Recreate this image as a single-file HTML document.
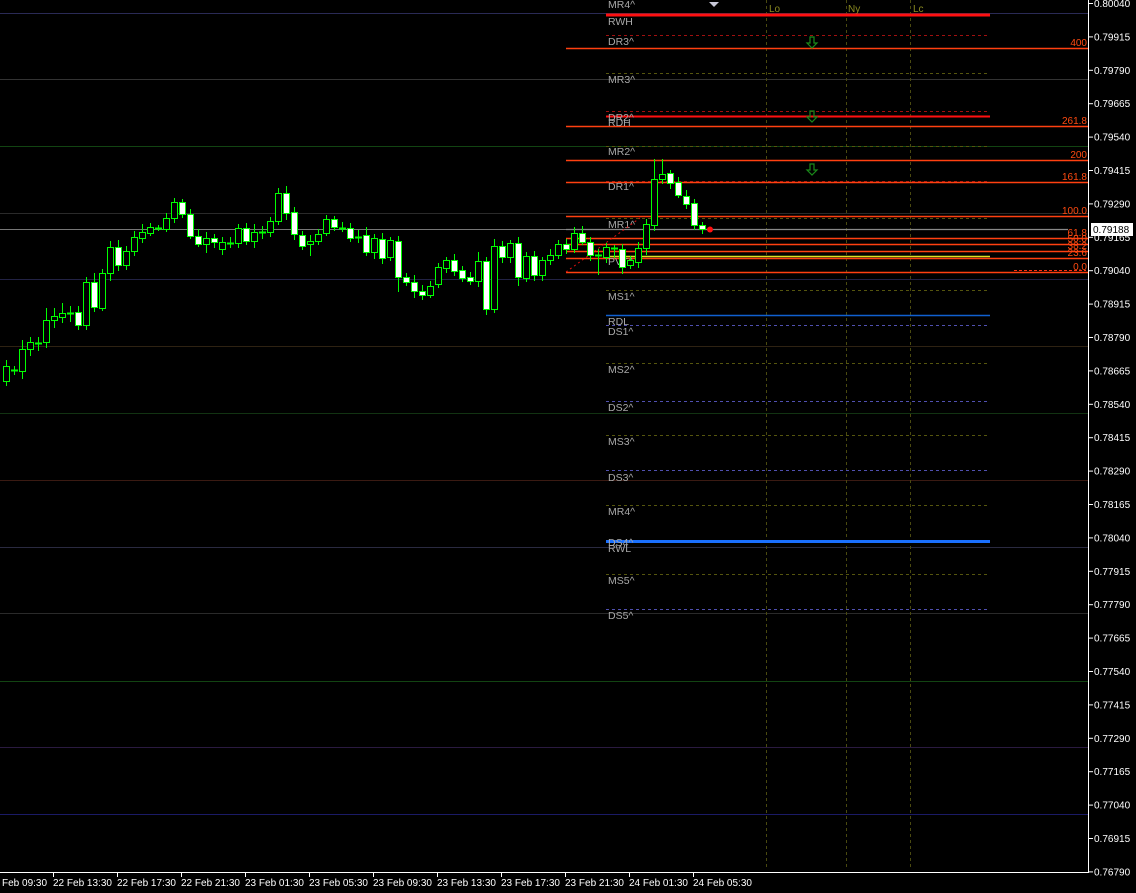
<!DOCTYPE html>
<html><head><meta charset="utf-8"><style>
html,body{margin:0;padding:0;background:#000;width:1136px;height:893px;overflow:hidden}
svg{display:block}
text{font-family:"Liberation Sans","DejaVu Sans",sans-serif}
</style></head><body>
<svg id="s" width="1136" height="893" xmlns="http://www.w3.org/2000/svg">
<rect width="1136" height="893" fill="#000"/>
<g id="full"></g>
<g id="lv"></g>
<g id="cd"></g>
<g id="ax"></g>
</svg>
<script>
var NS="http://www.w3.org/2000/svg";
function el(p,t,a,txt){var e=document.createElementNS(NS,t);for(var k in a)e.setAttribute(k,a[k]);if(txt!=null)e.textContent=txt;document.getElementById(p).appendChild(e);return e;}
function ln(p,x1,y1,x2,y2,c,w,d){var a={x1:x1,y1:y1,x2:x2,y2:y2,stroke:c,"stroke-width":w||1};if(d)a["stroke-dasharray"]=d;return el(p,"line",a);}
// full width lines
[[13,"#2a2a55"],[79,"#333"],[146,"#124412"],[213,"#2a2a2a"],[279,"#222244"],[346,"#2e2212"],[413,"#123312"],[480,"#3a1a12"],[547,"#2a2a40"],[613,"#2a2a2a"],[681,"#124412"],[747,"#2a1a40"],[814,"#1a1a66"]].forEach(function(v){ln("full",0,v[0]+.5,1088,v[0]+.5,v[1],1);});
// vertical session lines
[766,846,910].forEach(function(x){ln("full",x+.5,0,x+.5,870,"#4a4a10",1,"3,3");});
el("lv","text",{x:769,y:12,fill:"#8a8a20","font-size":10},"Lo");
el("lv","text",{x:848,y:12,fill:"#8a8a20","font-size":10},"Ny");
el("lv","text",{x:913,y:12,fill:"#8a8a20","font-size":10},"Lc");
// dashed pivots
var ol="#55550e",db="#5050b0",dr="#a01010";
[[35,dr],[73,ol],[111,dr],[146,ol],[181,dr],[218,ol],[290,ol],[325,db],[363,ol],[401,db],[435,ol],[470,db],[505,ol],[540,db],[574,ol],[609,db]].forEach(function(v){ln("lv",606,v[0]+.5,990,v[0]+.5,v[1],1,"3,3");});
// solid level lines
ln("lv",606,15,990,15,"#ff1010",3);
ln("lv",606,116.5,990,116.5,"#ff1010",2);
ln("lv",606,315.5,990,315.5,"#1060d0",1.5);
ln("lv",606,541.5,990,541.5,"#1a70ff",3);
ln("lv",606,256.5,990,256.5,"#e0e020",1.5);
// fib lines
[[48,"400"],[126,"261.8"],[160,"200"],[182,"161.8"],[216,"100.0"],[238,"61.8"],[244,"50.0"],[251,"38.2"],[258,"23.6"],[272,"0.0"]].forEach(function(v){ln("lv",566,v[0]+.5,1088,v[0]+.5,"#ff4010",1.5);el("lv","text",{x:1087,y:v[0]-2,fill:"#ff4a10","font-size":10,"text-anchor":"end"},v[1]);});
ln("lv",1014,270.5,1086,270.5,"#ff3010",1,"3,2");
// current price line
ln("lv",566,229.5,1068,229.5,"#888",1.2);
ln("lv",0,229.5,566,229.5,"#777",1);
// labels
[[8,"MR4^"],[25,"RWH"],[45,"DR3^"],[83,"MR3^"],[121,"DR2^"],[126,"RDH"],[155,"MR2^"],[190,"DR1^"],[228,"MR1^"],[265,"PVT^"],[300,"MS1^"],[325,"RDL"],[335,"DS1^"],[373,"MS2^"],[411,"DS2^"],[445,"MS3^"],[481,"DS3^"],[515,"MR4^"],[546,"DS4^"],[552,"RWL"],[584,"MS5^"],[619,"DS5^"]].forEach(function(v){el("lv","text",{x:608,y:v[0],fill:"#a8a8a8","font-size":10.5},v[1]);});
// red diagonal
ln("lv",566,272,640,218,"#e01010",1,"2,3");
// green arrows
[42,116,169].forEach(function(y){el("lv","path",{d:"M810 "+(y-5)+"h4v6h3l-5 5l-5-5h3z",fill:"none",stroke:"#1a8a1a","stroke-width":1.2});});
// triangle top
el("lv","path",{d:"M709 2h10l-5 5z",fill:"#c8c8d8"});
// candles [open, close]
var C=[[381,366],[370,370],[371,349],[349,342],[343,343],[342,320],[320,316],[317,313],[313,313],[312,325],[325,282],[282,307],[308,273],[273,247],[247,265],[265,251],[251,237],[238,232],[233,227],[228,228],[229,218],[218,202],[202,214],[214,236],[236,244],[244,238],[238,242],[249,242],[243,243],[243,228],[228,241],[241,232],[232,232],[232,221],[221,193],[193,213],[212,234],[235,246],[244,241],[241,234],[233,219],[219,227],[228,228],[228,238],[237,237],[235,252],[252,238],[239,258],[257,240],[241,277],[277,282],[282,291],[291,295],[295,286],[284,267],[268,260],[260,271],[270,278],[277,281],[281,261],[261,309],[309,246],[246,257],[257,243],[243,277],[278,256],[256,275],[275,260],[260,255],[255,244],[244,249],[249,233],[233,242],[242,255],[255,255],[257,247],[248,248],[249,267],[265,260],[262,248],[248,224],[225,179],[179,174],[173,183],[182,195],[196,204],[203,225],[225,229]];
var hw=[6,4,9,5,6,12,8,10,7,6,5,9,4,6,7,5,6,8,4,3,5,4,3,5,7,6,4,5,6,4,5,8,6,4,5,7,5,4,6,5,4,3,6,5,7,8,4,6,3,5,4,7,6,5,4,3,6,4,5,9,4,7,5,3,6,4,5,3,6,4,5,6,7,5,6,4,3,5,4,6,5,20,15,3,5,6,4,3];
C.forEach(function(c,i){var x=6+8*i,o=c[0],cl=c[1],t=Math.min(o,cl),b=Math.max(o,cl),h=hw[i],l=hw[(i*7+3)%hw.length];
ln("cd",x+.5,t-h,x+.5,b+l,"#00ff00",1);
if(b-t<1){ln("cd",x-3,t+.5,x+4,t+.5,"#00ff00",2);return;}
var bear=o<cl;el("cd","rect",{x:x-2.5,y:t+.5,width:6,height:b-t,fill:bear?"#fff":"#000",stroke:"#00ff00","stroke-width":1});});
el("cd","circle",{cx:710,cy:229.5,r:3,fill:"#ff1010"});
// axes
ln("ax",1088.5,0,1088.5,873,"#fff",1);
ln("ax",0,872.5,1088,872.5,"#fff",1);
var ps=["0.80040","0.79915","0.79790","0.79665","0.79540","0.79415","0.79290","0.79165","0.79040","0.78915","0.78790","0.78665","0.78540","0.78415","0.78290","0.78165","0.78040","0.77915","0.77790","0.77665","0.77540","0.77415","0.77290","0.77165","0.77040","0.76915","0.76790"];
ps.forEach(function(p,i){var y=3+i*33.4;ln("ax",1088,y+.5,1093,y+.5,"#fff",1);el("ax","text",{x:1094,y:y+4,fill:"#fff","font-size":10},p);});
el("ax","rect",{x:1091,y:223,width:42,height:13,fill:"#fff"});
el("ax","text",{x:1093,y:233,fill:"#000","font-size":10},"0.79188");
var ts=["Feb 09:30","22 Feb 13:30","22 Feb 17:30","22 Feb 21:30","23 Feb 01:30","23 Feb 05:30","23 Feb 09:30","23 Feb 13:30","23 Feb 17:30","23 Feb 21:30","24 Feb 01:30","24 Feb 05:30"];
ts.forEach(function(t,i){var x=i==0?2:53+64*(i-1);if(i>0)ln("ax",x+.5,872,x+.5,877,"#fff",1);el("ax","text",{x:x,y:886,fill:"#fff","font-size":10},t);});
</script>
</body></html>
